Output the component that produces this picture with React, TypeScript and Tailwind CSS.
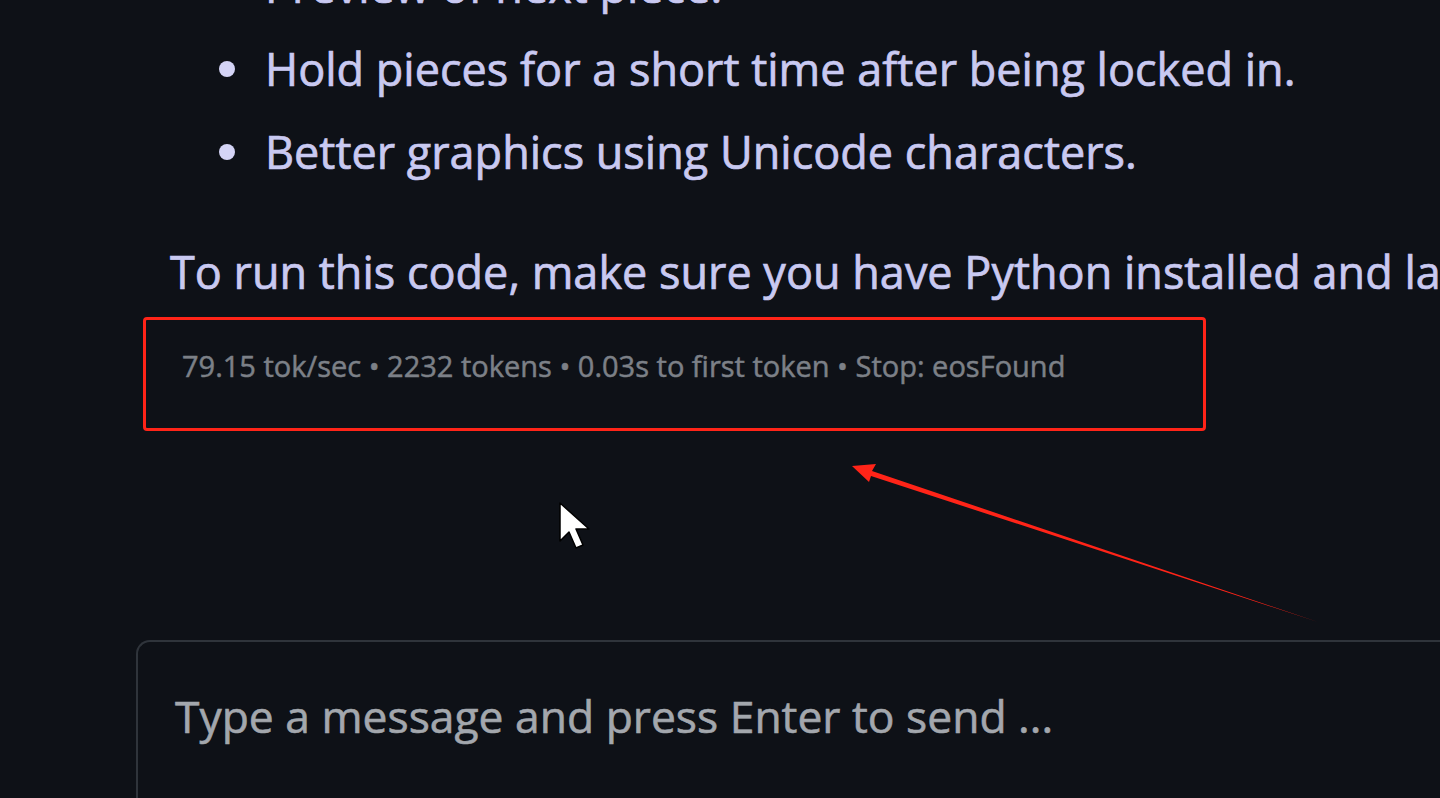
import React from "react";

const Dot = () => (
  <span className="mr-[30px] ml-[49px] inline-block h-[16px] w-[16px] shrink-0 rounded-full bg-[#d4d4f6]" />
);

export default function App() {
  return (
    <div
      className="relative h-[798px] w-[1440px] overflow-hidden bg-[#0e1117]"
      style={{ fontFamily: '"Open Sans", "Noto Sans", sans-serif' }}
    >
      <div className="pl-[170px]">
        <ul className="mt-[-56px] text-[45px] leading-[83px] text-[#c9c9f1] [-webkit-text-stroke:0.7px_currentColor]">
          <li className="flex items-center whitespace-nowrap">
            <Dot />
            Preview of next piece.
          </li>
          <li className="flex items-center whitespace-nowrap">
            <Dot />
            Hold pieces for a short time after being locked in.
          </li>
          <li className="flex items-center whitespace-nowrap">
            <Dot />
            Better graphics using Unicode characters.
          </li>
        </ul>
        <p className="mt-[37px] whitespace-nowrap text-[45px] leading-[83px] text-[#c9c9f1] [-webkit-text-stroke:0.7px_currentColor]">
          To run this code, make sure you have Python installed and launch it from a terminal.
        </p>
      </div>

      <div className="ml-[143px] mt-[4px] flex h-[114px] w-[1063px] items-start rounded-[4px] border-[3px] border-[#ff2418] pl-[36px] pt-[26px]">
        <span className="whitespace-nowrap text-[29px] leading-[40px] text-[#7c8087] [-webkit-text-stroke:0.5px_currentColor]">
          79.15 tok/sec • 2232 tokens • 0.03s to first token • Stop: eosFound
        </span>
      </div>

      <div className="ml-[136px] mt-[209px] h-[200px] rounded-tl-[14px] border-l-2 border-t-2 border-[#2f343b] pl-[37px] pt-[44px]">
        <span className="whitespace-nowrap text-[44.4px] leading-[60px] text-[#a3a7ad] [-webkit-text-stroke:0.6px_currentColor]">
          Type a message and press Enter to send ...
        </span>
      </div>

      <svg
        className="pointer-events-none absolute left-0 top-0"
        width="1440"
        height="798"
        viewBox="0 0 1440 798"
      >
        <polygon
          points="852,466 876,464 872,471 1318,622 871,476 869,482"
          fill="#ff2418"
        />
        <path
          d="M560,503 L560,541 L569,532 L576,548 L583,545 L576,529 L589,529 Z"
          fill="#ffffff"
          stroke="#000000"
          strokeWidth="1.5"
          strokeLinejoin="round"
        />
      </svg>
    </div>
  );
}
